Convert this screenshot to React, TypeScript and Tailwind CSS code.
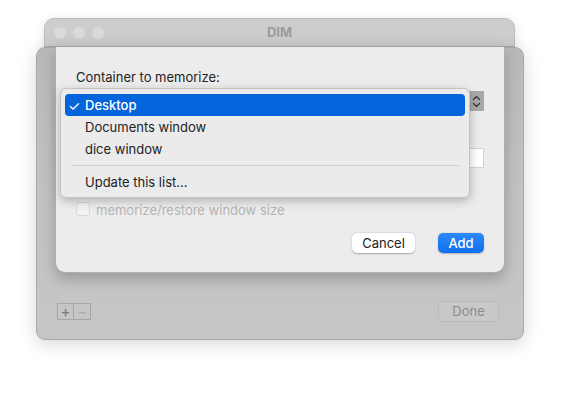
import React from 'react';

const font = { fontFamily: 'Inter, "Noto Sans", sans-serif' };

const MenuItem: React.FC<{ label: string; selected?: boolean }> = ({ label, selected }) => (
  <div
    className={`h-[22px] pt-[2px] flex items-center rounded-[4px] text-[13px] ${
      selected ? 'bg-[#0464dc] text-white' : 'text-[#222222]'
    }`}
  >
    <span className="w-[20px] pl-[3px] text-[14px] leading-none">{selected ? '✓' : ''}</span>
    <span className={selected ? 'font-medium' : ''}>{label}</span>
  </div>
);

const App: React.FC = () => {
  return (
    <div className="relative w-[572px] h-[397px] bg-white overflow-hidden" style={font}>
      {/* DIM window behind, only its title bar shows */}
      <div className="absolute left-[44px] top-[18px] w-[471px] h-[40px] rounded-t-[10px] bg-[#cdcdcd] border border-[#bdbdbd] shadow-[0_2px_12px_rgba(0,0,0,0.12)]">
        <div className="h-[28px] flex items-center px-[9px] gap-[7px] border-b border-[#a9a9a9]">
          <div className="w-[12px] h-[12px] rounded-full bg-[#dadada]" />
          <div className="w-[12px] h-[12px] rounded-full bg-[#dadada]" />
          <div className="w-[12px] h-[12px] rounded-full bg-[#dadada]" />
          <div className="flex-1 text-center text-[13px] font-bold text-[#9c9c9c] pr-[57px] pt-[1px]">DIM</div>
        </div>
      </div>

      {/* window body under the sheet */}
      <div className="absolute left-[36px] top-[47px] w-[488px] h-[293px] rounded-[9px] bg-gradient-to-b from-[#b9b9b9] via-[#c2c2c2] to-[#c6c6c6] border border-[#a8a8a8] shadow-[0_4px_18px_rgba(0,0,0,0.16)] flex flex-col justify-end pl-[20px] pr-[24px] pb-[17px]">
        <div className="flex items-center justify-between">
          <div className="flex">
            <div className="w-[17px] h-[17px] border border-[#a6a6a6] flex items-center justify-center text-[#777777] text-[15px] leading-none">+</div>
            <div className="w-[17px] h-[17px] border border-l-0 border-[#a6a6a6] flex items-center justify-center text-[#aaaaaa] text-[15px] leading-none">−</div>
          </div>
          <div className="w-[61px] h-[21px] pt-[1px] rounded-[5px] bg-[#c9c9c9] border border-[#bababa] flex items-center justify-center text-[13px] text-[#8c8c8c]">
            Done
          </div>
        </div>
      </div>

      {/* sheet */}
      <div className="absolute left-[55px] top-[47px] w-[450px] h-[226px] rounded-b-[10px] bg-[#ececec] border border-t-0 border-[#b0b0b0] shadow-[0_6px_14px_rgba(0,0,0,0.22)] px-[20px] pt-[22px]">
        <div className="text-[13px] leading-[16px] text-[#222222]">Container to memorize:</div>

        {/* popup button (mostly covered by its open menu) */}
        <div className="mt-[6px] h-[20px] flex rounded-[4px] bg-white">
          <div className="flex-1" />
          <div className="w-[15px] h-[20px] bg-[#a9a9a9] flex items-center justify-center">
            <svg width="9" height="13" viewBox="0 0 9 13" fill="none" stroke="#3a3a3a" strokeWidth="1.4" strokeLinecap="round" strokeLinejoin="round">
              <path d="M1.5 4.5 L4.5 1.5 L7.5 4.5" />
              <path d="M1.5 8.5 L4.5 11.5 L7.5 8.5" />
            </svg>
          </div>
        </div>

        {/* text field */}
        <div className="mt-[37px] h-[20px] bg-white border border-[#d2d2d2]" />

        {/* checkbox */}
        <div className="mt-[33px] h-[16px] flex items-center gap-[6px]">
          <div className="w-[14px] h-[14px] rounded-[3px] bg-[#f2f2f2] border border-[#d8d8d8]" />
          <span className="text-[13px] leading-[16px] pt-[2px] text-[#b4b4b4]">memorize/restore window size</span>
        </div>

        <div className="mt-[16px] flex justify-end gap-[23px]">
          <div className="w-[63px] h-[20px] pt-[1px] rounded-[5px] bg-white shadow-[0_0.5px_1.5px_rgba(0,0,0,0.3)] flex items-center justify-center text-[13px] text-[#222222]">
            Cancel
          </div>
          <div className="w-[46px] h-[20px] pt-[1px] rounded-[5px] bg-gradient-to-b from-[#2c89f8] to-[#0e6ff0] shadow-[0_0.5px_1.5px_rgba(0,0,0,0.25)] flex items-center justify-center text-[13px] font-medium text-white">
            Add
          </div>
        </div>

        {/* open popup menu */}
        <div className="absolute left-[4px] top-[41px] w-[410px] h-[110px] rounded-[6px] bg-[#ebebeb] border border-[#c4c4c4] shadow-[0_3px_10px_rgba(0,0,0,0.25)] px-[4px] pt-[5px]">
          <MenuItem label="Desktop" selected />
          <MenuItem label="Documents window" />
          <MenuItem label="dice window" />
          <div className="h-[11px] flex items-center px-[6px]">
            <div className="h-px w-full bg-[#d0d0d0]" />
          </div>
          <MenuItem label="Update this list..." />
        </div>
      </div>
    </div>
  );
};

export default App;
